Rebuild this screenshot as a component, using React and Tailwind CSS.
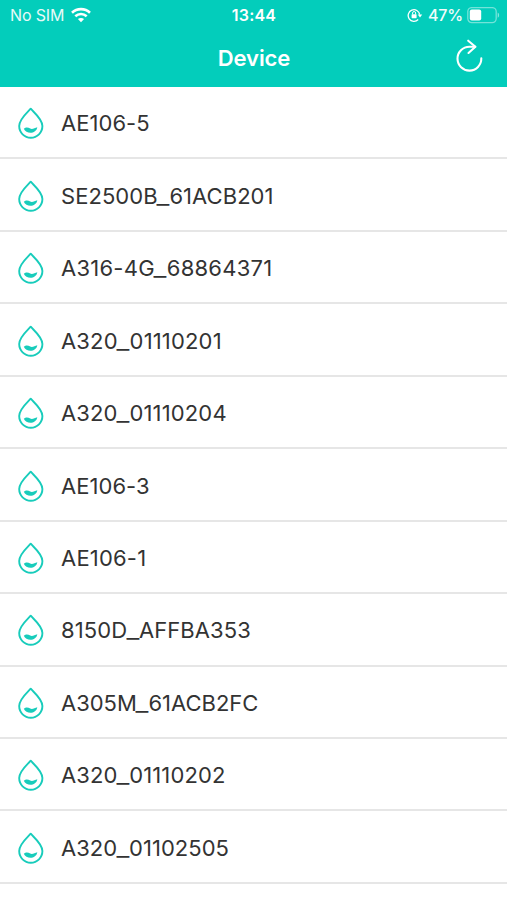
const devices = [
  { name: 'AE106-5', tracking: 'tracking-[0.05px]' },
  { name: 'SE2500B_61ACB201', tracking: 'tracking-[0.05px]' },
  { name: 'A316-4G_68864371', tracking: 'tracking-[0.24px]' },
  { name: 'A320_01110201', tracking: 'tracking-[0.16px]' },
  { name: 'A320_01110204', tracking: 'tracking-[0.14px]' },
  { name: 'AE106-3', tracking: 'tracking-[0.05px]' },
  { name: 'AE106-1', tracking: 'tracking-[0.2px]' },
  { name: '8150D_AFFBA353', tracking: 'tracking-[0.08px]' },
  { name: 'A305M_61ACB2FC', tracking: 'tracking-[-0.02px]' },
  { name: 'A320_01110202', tracking: 'tracking-[0.1px]' },
  { name: 'A320_01102505', tracking: 'tracking-[0.04px]' },
];

function WifiIcon() {
  return (
    <svg className="h-[16px] w-[20px]" viewBox="0 0 20 16" fill="none" stroke="white" strokeWidth="2.6">
      <path d="M1 5.7C6 .9 14 .9 19 5.7" />
      <path d="M4.3 9.3C7.6 6.3 12.4 6.3 15.7 9.3" />
      <path d="M10 15.2L6.9 12.1C8.6 10.5 11.4 10.5 13.1 12.1Z" fill="white" stroke="none" />
    </svg>
  );
}

function RotationLockIcon() {
  return (
    <svg className="h-[14px] w-[16px]" viewBox="0 0 16 14" fill="none" stroke="white">
      <path d="M11.2 11.5A5.8 5.8 0 1 1 12.7 6.6" strokeWidth="1.3" />
      <path d="M10.8 6.4H15.2L13 9.5Z" fill="white" stroke="none" />
      <rect x="4.6" y="6.2" width="5" height="4" rx=".6" fill="white" stroke="none" />
      <path d="M5.6 6.3V5a1.5 1.5 0 0 1 3 0v1.3" strokeWidth="1" />
    </svg>
  );
}

function BatteryIcon() {
  return (
    <svg className="h-[17px] w-[33px]" viewBox="0 0 33 17" fill="none">
      <rect x=".8" y=".6" width="28.4" height="15" rx="4" stroke="white" strokeOpacity=".45" strokeWidth="1.3" />
      <rect x="2.8" y="2.6" width="11.4" height="11" rx="2" fill="white" />
      <path d="M30.7 5.5C32.6 6.3 32.6 9.9 30.7 10.7Z" fill="white" fillOpacity=".5" />
    </svg>
  );
}

function RefreshIcon() {
  return (
    <svg className="h-[34px] w-[28px]" viewBox="0 0 28 34" fill="none" stroke="white" strokeWidth="2.1" strokeLinecap="round" strokeLinejoin="round">
      <path d="M25.3 19.4A11.9 11.9 0 1 1 13.4 7.8H19.2" />
      <path d="M12.2 1.7L19.4 7.8L12.5 14" />
    </svg>
  );
}

function DropIcon() {
  return (
    <svg className="h-[32px] w-[26px] shrink-0" viewBox="0 0 26 32" fill="none">
      <path d="M12.7 1.7C9.9 5.1 1.2 11.8 1.2 19.1A11.6 11.6 0 0 0 24.4 19.1C24.4 11.8 15.5 5.1 12.7 1.7Z" stroke="#18ccbb" strokeWidth="1.9" strokeLinejoin="round" />
      <path d="M5.8 21.8C8 19.7 10.2 20.3 12.2 21.5C14.5 22.7 16.6 20.7 19.3 20.3C18.4 27.1 8.2 27.5 5.8 21.8Z" fill="#18ccbb" />
    </svg>
  );
}

function DeviceName({ name, tracking }) {
  const [model, serial] = name.split('_');
  return (
    <span className={`text-[22px] leading-none whitespace-nowrap ${tracking}`}>
      {model}
      {serial && <span className="mr-[1.2px] ml-[0.5px] inline-block scale-x-[1.28]">_</span>}
      {serial}
    </span>
  );
}

export default function App() {
  return (
    <div className="h-[900px] w-[507px] overflow-hidden bg-white font-['Inter',sans-serif] text-[#333333]">
      <header className="h-[87px] bg-[#03cdbb] text-white">
        <div className="grid h-[30px] grid-cols-3 items-center pr-[7px] pl-[10px] text-[16px] leading-[30px]">
          <div className="flex items-center gap-[7px]">
            <span className="tracking-[-0.15px] opacity-90">No SIM</span>
            <WifiIcon />
          </div>
          <div className="pr-[2px] text-center font-semibold tracking-[0.2px]">13:44</div>
          <div className="flex items-center justify-end">
            <RotationLockIcon />
            <span className="mr-[4px] ml-[5px] font-medium tracking-[-0.2px] opacity-95">47%</span>
            <BatteryIcon />
          </div>
        </div>
        <div className="grid h-[56px] grid-cols-[1fr_auto_1fr] items-center pr-[23px]">
          <span />
          <h1 className="pl-[24px] text-[22px] font-semibold tracking-[-0.1px]">Device</h1>
          <div className="flex justify-end pb-[4px]">
            <RefreshIcon />
          </div>
        </div>
      </header>
      <ul>
        {devices.map((device) => (
          <li key={device.name} className="flex h-[72.45px] items-center gap-[17px] border-b-2 border-[#e6e6e6] pt-[2.4px] pl-[18px]">
            <DropIcon />
            <DeviceName name={device.name} tracking={device.tracking} />
          </li>
        ))}
      </ul>
    </div>
  );
}
